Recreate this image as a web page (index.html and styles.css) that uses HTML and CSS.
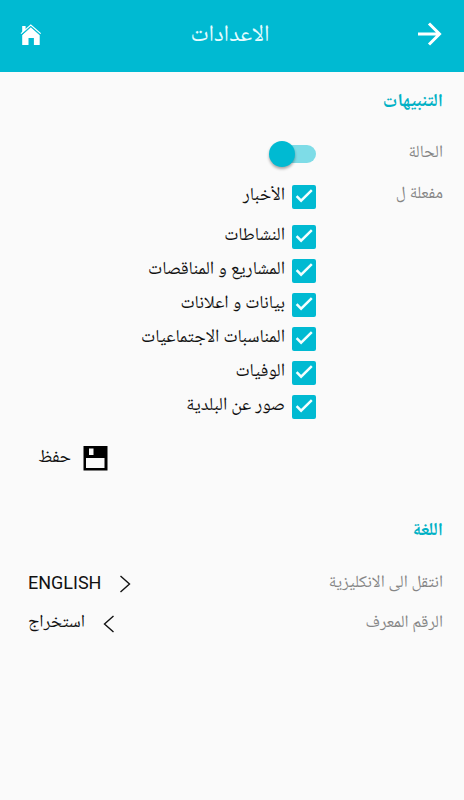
FILE: index.html
```html
<!DOCTYPE html>
<html lang="ar" dir="rtl">
<head>
<meta charset="utf-8">
<title>الاعدادات</title>
<link rel="stylesheet" href="styles.css">
</head>
<body>
<svg class="defs" width="0" height="0"><symbol id="check" viewBox="0 0 24 24"><rect width="24" height="24" rx="2" fill="#00bad2"/><path d="M4.600 11.200l4.500 4.500L19.800 5.200" fill="none" stroke="#f4ffff" stroke-width="2.5"/></symbol></svg>
<header class="bar">
  <svg class="icon-next" width="24" height="24" viewBox="0 0 24 24" fill="none" stroke="#fff" stroke-width="3"><path d="M0 12H21M11 1.500L21.500 12L11 22.500"/></svg>
  <h1>الاعدادات</h1>
  <svg class="icon-home" width="22" height="22" viewBox="0 0 22 22"><path fill="#fff" d="M2.2 9.2V2h3.4v3.8zM2.2 11L10.8 3l8.9 8v10h-5.8v-7H8.5v7H2.2z"/><path d="M1 9.6L10.8 1l9.9 8.6" fill="none" stroke="#fff" stroke-width="1.2"/><path d="M1.8 10.9L10.8 3l9.1 7.9" fill="none" stroke="#00bad2" stroke-width=".7"/></svg>
</header>
<main>
  <h2>التنبيهات</h2>
  <div class="row status"><span class="label">الحالة</span><span class="switch"><span class="thumb"></span></span></div>
  <div class="row enabled">
    <span class="label">مفعلة ل</span>
    <ul class="options">
      <li><svg><use href="#check"/></svg><span>الأخبار</span></li>
      <li><svg><use href="#check"/></svg><span>النشاطات</span></li>
      <li><svg><use href="#check"/></svg><span>المشاريع و المناقصات</span></li>
      <li><svg><use href="#check"/></svg><span>بيانات و اعلانات</span></li>
      <li><svg><use href="#check"/></svg><span>المناسبات الاجتماعيات</span></li>
      <li><svg><use href="#check"/></svg><span>الوفيات</span></li>
      <li><svg><use href="#check"/></svg><span>صور عن البلدية</span></li>
    </ul>
  </div>
  <div class="save"><svg width="25" height="25" viewBox="0 0 25 25"><path d="M0.500 0h24v24.500h-24z"/><path fill="#fafafa" d="M6 2.500h4.500v6.500H6zM3 12h18.500v10H3z"/></svg><span>حفظ</span></div>
  <h2 class="lang">اللغة</h2>
  <div class="row link"><span class="label">انتقل الى الانكليزية</span><span class="action"><svg width="12" height="18" viewBox="0 0 12 18"><path d="M1.500 1L10.500 9l-9 8"/></svg><span class="latin">ENGLISH</span></span></div>
  <div class="row link"><span class="label">الرقم المعرف</span><span class="action"><svg width="12" height="18" viewBox="0 0 12 18"><path d="M10.500 1L1.500 9l9 8"/></svg><span class="extract">استخراج</span></span></div>
</main>
</body>
</html>
```
FILE: styles.css
```css
* { box-sizing: border-box; }
body {
  margin: 0;
  min-height: 800px;
  background: #fafafa;
  color: #111;
  font: 18.2px/24px "Noto Naskh Arabic UI", "Noto Naskh Arabic", "DejaVu Sans", sans-serif;
}
.defs { display: block; height: 0; }
.bar {
  height: 72px;
  padding: 0 22px 4px 20px;
  display: grid;
  grid-template-columns: 24px 1fr 22px;
  align-items: center;
  background: #00bad2;
}
h1 { margin: 0; padding-top: 2px; font-size: 23.3px; line-height: 30px; font-weight: 400; text-align: center; color: #e5fcff; }
.icon-home { margin-top: 2px; }
main { padding: 18px 21px 0 28px; }
h2 { margin: 0; height: 24px; font-size: 18.3px; line-height: 24px; font-weight: 700; color: #00b1c5; }
.row { display: flex; }
.label { width: 127px; flex: none; white-space: nowrap; color: #858585; font-size: 17px; }
.status { height: 41px; margin-top: 27px; }
.switch { width: 47px; height: 18px; margin-top: 4px; display: flex; justify-content: flex-end; align-items: center; border-radius: 9px; background: linear-gradient(to left, #7edce7 36px, transparent 36px); }
.thumb { width: 26px; height: 26px; border-radius: 50%; background: #00bad2; box-shadow: 0 2px 3px #0005; }
.options { margin: 3px 0 0; padding: 0; list-style: none; }
.options li { display: flex; gap: 7px; height: 33.9px; }
.options li:first-child { height: 40.300px; }
.options svg { width: 24px; height: 24px; flex: none; }
.options span { margin-top: -2px; white-space: nowrap; }
.save { display: flex; gap: 12px; padding-right: 335px; margin-top: 17.6px; height: 25px; white-space: nowrap; }
.save svg { flex: none; }
.save span { margin-top: -1px; }
.lang { margin-top: 48px; margin-bottom: 28px; }
.link { height: 40px; justify-content: space-between; }
.action { display: flex; gap: 18px; white-space: nowrap; }
.action svg { margin-top: 4px; fill: none; stroke: #111; stroke-width: 1.4; }
.extract { margin: -1px 0 0; font-size: 17.8px; }
.latin { font: 18px/23px Roboto, sans-serif; }
```
